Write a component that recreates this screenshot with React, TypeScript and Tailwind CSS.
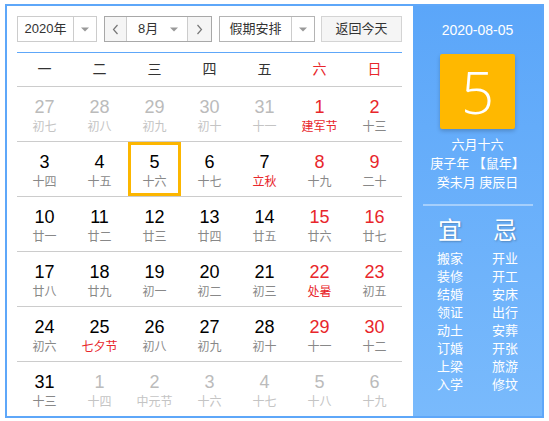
import React from "react";

type Day = { n: number; l: string; other?: boolean; wk?: boolean; hol?: boolean; today?: boolean };

const rows: Day[][] = [
  [
    { n: 27, l: "初七", other: true },
    { n: 28, l: "初八", other: true },
    { n: 29, l: "初九", other: true },
    { n: 30, l: "初十", other: true },
    { n: 31, l: "十一", other: true },
    { n: 1, l: "建军节", wk: true, hol: true },
    { n: 2, l: "十三", wk: true },
  ],
  [
    { n: 3, l: "十四" },
    { n: 4, l: "十五" },
    { n: 5, l: "十六", today: true },
    { n: 6, l: "十七" },
    { n: 7, l: "立秋", hol: true },
    { n: 8, l: "十九", wk: true },
    { n: 9, l: "二十", wk: true },
  ],
  [
    { n: 10, l: "廿一" },
    { n: 11, l: "廿二" },
    { n: 12, l: "廿三" },
    { n: 13, l: "廿四" },
    { n: 14, l: "廿五" },
    { n: 15, l: "廿六", wk: true },
    { n: 16, l: "廿七", wk: true },
  ],
  [
    { n: 17, l: "廿八" },
    { n: 18, l: "廿九" },
    { n: 19, l: "初一" },
    { n: 20, l: "初二" },
    { n: 21, l: "初三" },
    { n: 22, l: "处暑", wk: true, hol: true },
    { n: 23, l: "初五", wk: true },
  ],
  [
    { n: 24, l: "初六" },
    { n: 25, l: "七夕节", hol: true },
    { n: 26, l: "初八" },
    { n: 27, l: "初九" },
    { n: 28, l: "初十" },
    { n: 29, l: "十一", wk: true },
    { n: 30, l: "十二", wk: true },
  ],
  [
    { n: 31, l: "十三" },
    { n: 1, l: "十四", other: true },
    { n: 2, l: "中元节", other: true },
    { n: 3, l: "十六", other: true },
    { n: 4, l: "十七", other: true },
    { n: 5, l: "十八", other: true },
    { n: 6, l: "十九", other: true },
  ],
];

const weekdays = ["一", "二", "三", "四", "五", "六", "日"];
const yi = ["搬家", "装修", "结婚", "领证", "动土", "订婚", "上梁", "入学"];
const ji = ["开业", "开工", "安床", "出行", "安葬", "开张", "旅游", "修坟"];

function Tri() {
  return (
    <svg width="8" height="5" viewBox="0 0 8 5">
      <polygon points="0,0.5 8,0.5 4,4.5" fill="#999" />
    </svg>
  );
}

function Chevron({ dir }: { dir: "l" | "r" }) {
  return (
    <svg width="7" height="11" viewBox="0 0 7 11">
      <polyline
        points={dir === "l" ? "5.5,1 1.5,5.5 5.5,10" : "1.5,1 5.5,5.5 1.5,10"}
        fill="none"
        stroke="#777"
        strokeWidth="1.2"
      />
    </svg>
  );
}

function Cell({ d }: { d: Day }) {
  let numColor = "text-[#000]";
  if (d.other) numColor = "text-[#bbbbbb]";
  else if (d.wk) numColor = "text-[#e8262b]";
  let lunColor = "text-[#888888]";
  if (d.other) lunColor = "text-[#c4c4c4]";
  else if (d.hol) lunColor = "text-[#e8262b]";
  return (
    <div className="relative flex w-[55px] flex-col items-center justify-center pt-[3px]">
      {d.today && <div className="absolute inset-y-0 left-[1px] right-[1px] border-[3px] border-[#fcb600]" />}
      <div className={`text-[18px] leading-[22px] ${numColor}`}>{d.n}</div>
      <div className={`mt-[1px] text-[12px] leading-[16px] ${lunColor}`}>{d.l}</div>
    </div>
  );
}

export default function App() {
  return (
    <div
      className="h-[421px] w-[549px] bg-white pl-[5px] pt-[4px]"
      style={{ fontFamily: '"Liberation Sans", "Noto Sans CJK SC", sans-serif' }}
    >
      <div className="flex h-[414px] w-[539px] border-2 border-[#5ea7f9]">
        {/* left */}
        <div className="w-[406px] pl-[10px] pt-[10px]">
          <div className="flex h-[26px] w-[385px] items-stretch text-[13px] text-[#333]">
            <div className="flex w-[80px] border border-[#cccccc] bg-white">
              <div className="flex w-[55px] items-center justify-center">2020年</div>
              <div className="flex flex-1 items-center justify-center border-l border-[#cccccc]">
                <Tri />
              </div>
            </div>
            <div className="ml-[7px] flex w-[108px] border border-[#a8a8a8] bg-white">
              <div className="flex w-[21px] items-center justify-center bg-[#f5f5f5]">
                <Chevron dir="l" />
              </div>
              <div className="flex w-[62px] items-center justify-between border-x border-[#cccccc] pl-[11px] pr-[9px]">
                <span>8月</span>
                <Tri />
              </div>
              <div className="flex flex-1 items-center justify-center bg-[#f5f5f5]">
                <Chevron dir="r" />
              </div>
            </div>
            <div className="ml-[7px] flex w-[96px] border border-[#b4b4b4] bg-white">
              <div className="flex w-[71px] items-center justify-center">假期安排</div>
              <div className="flex flex-1 items-center justify-center border-l border-[#cccccc]">
                <Tri />
              </div>
            </div>
            <div className="ml-[6px] flex flex-1 items-center justify-center border border-[#d4d4d4] bg-[#f5f5f5]">
              返回今天
            </div>
          </div>
          <div className="mt-[10px] w-[385px] border-t border-[#5ea7f9]">
            <div className="flex h-[34px] border-b border-[#cccccc] text-[14px]">
              {weekdays.map((w, i) => (
                <div
                  key={w}
                  className={`flex w-[55px] items-center justify-center ${i >= 5 ? "text-[#e8262b]" : "text-[#333]"}`}
                >
                  {w}
                </div>
              ))}
            </div>
            {rows.map((r, ri) => (
              <div
                key={ri}
                className={`flex ${ri < 5 ? "h-[55px] border-b border-[#cccccc]" : "h-[54px]"}`}
              >
                {r.map((d, di) => (
                  <Cell key={di} d={d} />
                ))}
              </div>
            ))}
          </div>
        </div>
        {/* right */}
        <div className="flex flex-1 flex-col items-center bg-linear-to-b from-[#5ba6f9] to-[#79bafc] text-white">
          <div className="mt-[14px] text-[14px] leading-[20px]">2020-08-05</div>
          <div
            className="mt-[14px] flex h-[75px] w-[75px] items-center justify-center rounded-[2px] bg-[#ffb800] text-[58px] font-light leading-none shadow-[0_2px_4px_rgba(0,0,0,0.2)]"
            style={{ fontFamily: '"Open Sans", "Liberation Sans", sans-serif' }}
          >
            5
          </div>
          <div className="mt-[6px] text-[13px] leading-[19px]">六月十六</div>
          <div className="text-[13px] leading-[19px]">庚子年 【鼠年】</div>
          <div className="text-[13px] leading-[19px]">癸未月 庚辰日</div>
          <div className="mt-[12px] h-[2px] w-[110px] bg-white/40" />
          <div className="mt-[10px] flex">
            <div className="flex w-[55px] flex-col items-center">
              <div className="text-[24px] leading-[30px] [text-shadow:1px_1px_2px_rgba(0,0,0,0.25)]">宜</div>
              <div className="mt-[4px] flex flex-col items-center text-[13px] leading-[18px]">
                {yi.map((t) => (
                  <div key={t}>{t}</div>
                ))}
              </div>
            </div>
            <div className="flex w-[55px] flex-col items-center">
              <div className="text-[24px] leading-[30px] [text-shadow:1px_1px_2px_rgba(0,0,0,0.25)]">忌</div>
              <div className="mt-[4px] flex flex-col items-center text-[13px] leading-[18px]">
                {ji.map((t) => (
                  <div key={t}>{t}</div>
                ))}
              </div>
            </div>
          </div>
        </div>
      </div>
    </div>
  );
}
